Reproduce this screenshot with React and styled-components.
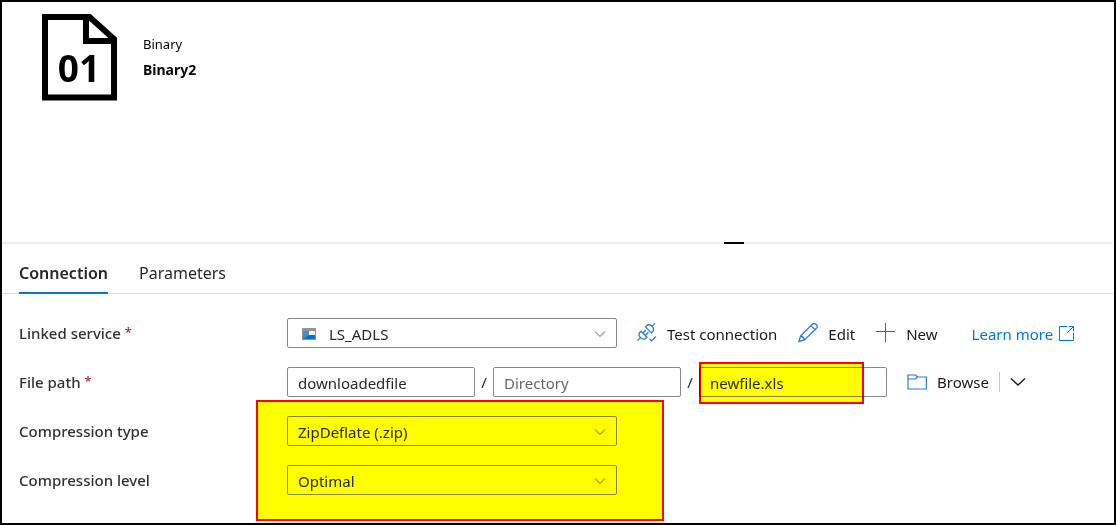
import React from "react";
import styled, { createGlobalStyle } from "styled-components";

const GlobalStyle = createGlobalStyle`
  *, *::before, *::after { box-sizing: border-box; }
  body {
    margin: 0;
    background: #fff;
    color: #292827;
    font-family: "Noto Sans", "Open Sans", sans-serif;
    font-size: 15px;
    line-height: 20px;
  }
  button, input, select { font: inherit; color: inherit; }
`;

const Frame = styled.div`
  display: flex;
  flex-direction: column;
  min-height: 100vh;
  border: 2px solid #000;
`;

const Header = styled.header`
  display: flex;
  gap: 25px;
  min-height: 240px;
  padding: 11px 40px;
`;

const Titles = styled.div`
  display: flex;
  flex-direction: column;
  gap: 6px;
  padding-top: 21px;
  font-size: 13px;
  color: #000;
`;

const DatasetName = styled.h1`
  margin: 0;
  font-size: 14px;
  font-weight: 700;
`;

const Splitter = styled.div`
  display: flex;
  height: 2px;
  background: #ededed;
  &::before { content: ""; flex: 722; }
  &::after { content: ""; flex: 370; }
`;

const SplitterHandle = styled.div`
  width: 20px;
  background: #000;
`;

const TabList = styled.div`
  display: flex;
  gap: 31px;
  height: 50px;
  padding: 0 17px;
  box-shadow: inset 0 -1px #dcdcdc;
`;

const Tab = styled.button`
  padding: 10px 0 0;
  border: 0;
  border-bottom: 2px solid ${(p) => (p.$active ? "#0078d4" : "transparent")};
  background: none;
  font-size: 16px;
  font-weight: ${(p) => (p.$active ? 600 : 400)};
`;

const Form = styled.form`
  display: flex;
  flex-direction: column;
  gap: 19px;
  padding: 24px 17px 0;
`;

const Row = styled.div`
  display: grid;
  grid-template-columns: 268px 1fr;
  align-items: center;
`;

const RowGroup = styled.div`
  position: relative;
  display: flex;
  flex-direction: column;
  gap: 19px;
`;

const Label = styled.label`
  color: #323130;
  font-weight: 500;
`;

const Required = styled.span`
  color: #a4262c;
  font-size: 13px;
  vertical-align: 2px;
  line-height: 1;
`;

const Controls = styled.div`
  display: flex;
  align-items: center;
`;

const SelectBox = styled.div`
  position: relative;
  width: 330px;
`;

const fieldStyle = `
  display: block;
  width: 100%;
  height: 30px;
  padding: 2px 10px 0;
  border: 1px solid #8a8886;
  border-radius: 2px;
  background: #fff;
  outline: none;
`;

const Select = styled.select`
  ${fieldStyle}
  appearance: none;
  padding-left: ${(p) => (p.$withIcon ? 41 : 10)}px;
`;

const SelectChevron = styled.svg`
  position: absolute;
  right: 11px;
  top: 12px;
  pointer-events: none;
`;

const SelectIcon = styled.svg`
  position: absolute;
  left: 15px;
  top: 10px;
  pointer-events: none;
`;

const FieldBox = styled.div`
  position: relative;
  width: 188px;
`;

const Input = styled.input`
  ${fieldStyle}
  &::placeholder { color: #69676a; opacity: 1; }
`;

const Slash = styled.span`
  width: 18px;
  text-align: center;
`;

const Highlight = styled.div`
  position: absolute;
  border: 2px solid #f00;
  background: #ff0;
  mix-blend-mode: multiply;
  pointer-events: none;
`;

const FileHighlight = styled(Highlight)`
  inset: -5px 23px -7px 0;
`;

const CompressionHighlight = styled(Highlight)`
  top: -16px;
  bottom: -26px;
  left: 237px;
  width: 408px;
`;

const Actions = styled.div`
  display: flex;
  align-items: center;
  gap: ${(p) => p.$gap}px;
  padding-left: 20px;
  white-space: nowrap;
`;

const Action = styled.button`
  display: flex;
  align-items: center;
  gap: 10px;
  padding: 0;
  border: 0;
  background: none;
  color: #1b1a19;
`;

const ActionText = styled.span`
  padding-top: 2px;
`;

const LearnMore = styled.a`
  display: flex;
  align-items: center;
  gap: 6px;
  margin-left: 13px;
  color: #0078d4;
  text-decoration: none;
`;

const Divider = styled.span`
  width: 1px;
  height: 20px;
  background: #c8c6c4;
`;

const BinaryIcon = () => (
  <svg width="76" height="88" viewBox="0 0 76 88" aria-hidden="true">
    <path d="M3 4H47.5L72 26V84.5H3Z" fill="none" stroke="#000" strokeWidth="6" />
    <path d="M44 4V28H72" fill="none" stroke="#000" strokeWidth="6" />
    <text x="37" y="69" textAnchor="middle" fontFamily="Open Sans, sans-serif" fontWeight="700" fontSize="37">01</text>
  </svg>
);

const StorageIcon = () => (
  <SelectIcon width="14" height="12" viewBox="0 0 14 12" aria-hidden="true">
    <path d="M0 0H14V12H0Z" fill="#949494" />
    <path d="M1 3H13V11H1Z" fill="#0a70c4" />
    <path d="M1 3H7V7L1 11Z" fill="#3b91d8" />
    <path d="M7 3H13V7H7Z" fill="#f4f8fb" />
  </SelectIcon>
);

const Chevron = () => (
  <SelectChevron width="12" height="8" viewBox="0 0 12 8" aria-hidden="true">
    <path d="M1 1.5L6 6.5L11 1.5" fill="none" stroke="#605e5c" />
  </SelectChevron>
);

const PlugIcon = () => (
  <svg width="20" height="20" viewBox="0 0 20 20" fill="none" stroke="#2b7cd3" strokeWidth="1.3" aria-hidden="true">
    <path d="M.5 17.5L3.4 14.6M14.9 3.4L18 .4" />
    <path d="M8.4 3.9L14.4 9.9L15.5 8.8C17 7 16.8 5 15.1 3.3S11 1.4 9.4 2.9Z" />
    <path d="M4 8.2L10 14.2L9 15.1C7.3 16.6 5.2 16.3 3.5 14.6S1.5 10.8 3 9.2Z" />
    <path d="M5.9 10L8.9 7M8.4 12.3L11.4 9.3" />
    <path d="M12.5 15.7L14.7 17.9L19 13.6" />
  </svg>
);

const PencilIcon = () => (
  <svg width="20" height="20" viewBox="0 0 20 20" fill="none" stroke="#2b7cd3" strokeWidth="1.3" aria-hidden="true">
    <path d="M1 18.5L2.5 13L14.2 1.3Q16 -.2 18.2 1.6T18.4 5.3L6.5 17Z" />
    <path d="M2.5 13Q5.7 13.8 6.5 17M12.9 2.6L16.9 6.6" />
  </svg>
);

const PlusIcon = () => (
  <svg width="20" height="20" viewBox="0 0 20 20" stroke="#0078d4" aria-hidden="true">
    <path d="M9.5 0V19M0 8.5H19" />
  </svg>
);

const OpenIcon = () => (
  <svg width="15" height="15" viewBox="0 0 15 15" fill="none" stroke="#0078d4" aria-hidden="true">
    <path d="M8 .5H.5V14.5H14.5V7M9.5 .5H14.5V5.5M14.5 .5L8 7" />
  </svg>
);

const FolderIcon = () => (
  <svg width="20" height="16" viewBox="0 0 20 16" fill="none" stroke="#2b7cd3" strokeWidth="1.2" aria-hidden="true">
    <path d="M1 15V1H8.5L10.5 3H19.4V15ZM1 5H8.5L10.5 3" />
  </svg>
);

const MoreIcon = () => (
  <svg width="16" height="10" viewBox="0 0 16 10" fill="none" stroke="#201f1e" strokeWidth="1.5" aria-hidden="true">
    <path d="M1 1.5L8 8L15 1.5" />
  </svg>
);

export default function App() {
  return (
    <>
      <GlobalStyle />
      <Frame>
        <Header>
          <BinaryIcon />
          <Titles>
            <span>Binary</span>
            <DatasetName>Binary2</DatasetName>
          </Titles>
        </Header>
        <Splitter>
          <SplitterHandle />
        </Splitter>
        <TabList role="tablist">
          <Tab role="tab" aria-selected="true" $active>Connection</Tab>
          <Tab role="tab" aria-selected="false">Parameters</Tab>
        </TabList>
        <Form onSubmit={(e) => e.preventDefault()}>
          <Row>
            <Label htmlFor="service">Linked service <Required>*</Required></Label>
            <Controls>
              <SelectBox>
                <Select id="service" $withIcon>
                  <option>LS_ADLS</option>
                </Select>
                <StorageIcon />
                <Chevron />
              </SelectBox>
              <Actions $gap={21}>
                <Action type="button"><PlugIcon /><ActionText>Test connection</ActionText></Action>
                <Action type="button"><PencilIcon /><ActionText>Edit</ActionText></Action>
                <Action type="button"><PlusIcon /><ActionText>New</ActionText></Action>
                <LearnMore href="#learn"><ActionText>Learn more</ActionText><OpenIcon /></LearnMore>
              </Actions>
            </Controls>
          </Row>
          <Row>
            <Label htmlFor="container">File path <Required>*</Required></Label>
            <Controls>
              <FieldBox>
                <Input id="container" defaultValue="downloadedfile" />
              </FieldBox>
              <Slash>/</Slash>
              <FieldBox>
                <Input aria-label="Directory" placeholder="Directory" />
              </FieldBox>
              <Slash>/</Slash>
              <FieldBox>
                <Input aria-label="File name" defaultValue="newfile.xls" />
                <FileHighlight />
              </FieldBox>
              <Actions $gap={10}>
                <Action type="button"><FolderIcon />Browse</Action>
                <Divider />
                <Action type="button" aria-label="More browse options"><MoreIcon /></Action>
              </Actions>
            </Controls>
          </Row>
          <RowGroup>
            <Row>
              <Label htmlFor="type">Compression type</Label>
              <SelectBox>
                <Select id="type">
                  <option>ZipDeflate (.zip)</option>
                </Select>
                <Chevron />
              </SelectBox>
            </Row>
            <Row>
              <Label htmlFor="level">Compression level</Label>
              <SelectBox>
                <Select id="level">
                  <option>Optimal</option>
                </Select>
                <Chevron />
              </SelectBox>
            </Row>
            <CompressionHighlight />
          </RowGroup>
        </Form>
      </Frame>
    </>
  );
}
